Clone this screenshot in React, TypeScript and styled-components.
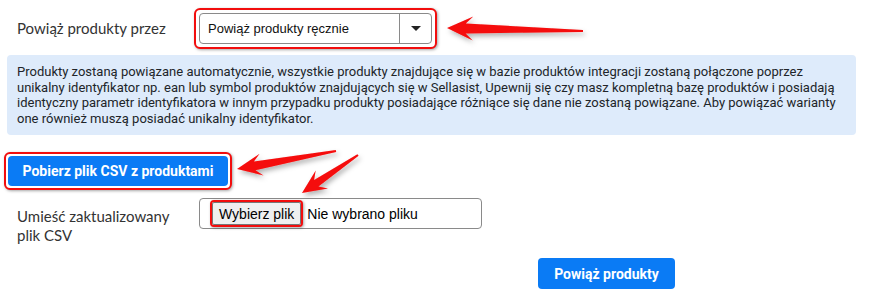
import * as React from 'react';
import styled, { createGlobalStyle } from 'styled-components';

const GlobalStyle = createGlobalStyle`
  body {
    margin: 0;
    background: #fff;
    font-family: Roboto, "Liberation Sans", sans-serif;
  }
`;

const Page = styled.div`
  position: relative;
  width: 869px;
  height: 297px;
  overflow: hidden;
  padding-top: 8px;
  box-sizing: border-box;
`;

const Row = styled.div<{ $top: number; $align?: string }>`
  display: flex;
  flex-flow: row nowrap;
  align-items: ${(p) => p.$align || 'center'};
  margin-top: ${(p) => p.$top}px;
  padding-left: 17px;
`;

const Label = styled.div<{ $w: number; $offset?: number }>`
  width: ${(p) => p.$w}px;
  margin-top: ${(p) => p.$offset || 0}px;
  flex-shrink: 0;
  font-family: Lato, "Noto Sans", sans-serif;
  font-size: 15px;
  line-height: 19px;
  color: #333;
`;

// the red marker drawn round a control in the screenshot
const Highlight = styled.div<{ $pad: number; $radius?: number }>`
  display: inline-flex;
  padding: ${(p) => p.$pad}px;
  border: 2px solid #f20d0d;
  border-radius: ${(p) => p.$radius || 6}px;
  box-shadow: 1px 1px 3px rgba(0, 0, 0, 0.35);
  background: #fff;
`;

const Select = styled.div`
  display: flex;
  align-items: stretch;
  width: 233px;
  height: 31px;
  box-sizing: border-box;
  border: 1px solid #8a8a8a;
  border-radius: 4px;
  background: #fff;

  > .value {
    flex: 1;
    display: flex;
    align-items: center;
    padding-left: 8px;
    font-family: "Liberation Sans", Arial, sans-serif;
    font-size: 13px;
    color: #111;
  }

  > .caret {
    width: 31px;
    border-left: 1px solid #8a8a8a;
    display: flex;
    align-items: center;
    justify-content: center;
  }
`;

const InfoBox = styled.div`
  margin: 6px 13px 0 7px;
  padding: 9px 10px 9px 10px;
  background: #deebfb;
  border-radius: 4px;
  font-family: Roboto, sans-serif;
  font-size: 13px;
  line-height: 15.5px;
  color: #212529;
  white-space: nowrap;
`;

const PrimaryButton = styled.button<{ $w: number; $h?: number }>`
  width: ${(p) => p.$w}px;
  height: ${(p) => p.$h || 30}px;
  border: none;
  border-radius: 4px;
  background: #0a7bf5;
  color: #fff;
  font-family: Roboto, sans-serif;
  font-weight: 700;
  font-size: 14px;
  padding: 0;
  cursor: pointer;
`;

const ButtonRow = styled.div`
  margin: 17px 0 0 4px;
`;

const FileInput = styled.div`
  display: flex;
  align-items: center;
  width: 283px;
  height: 31px;
  box-sizing: border-box;
  border: 1px solid #8a8a8a;
  border-radius: 4px;
  padding-left: 10px;
  font-family: "Liberation Sans", Arial, sans-serif;
  font-size: 14px;
  color: #000;

  > .name {
    margin-left: 4px;
  }
`;

const FileButton = styled.button`
  height: 23px;
  padding: 0 6px;
  border: 1px solid #767676;
  border-radius: 2px;
  background: #efefef;
  color: #000;
  font-family: "Liberation Sans", Arial, sans-serif;
  font-size: 14px;
`;

const Footer = styled.div`
  margin-top: 13px;
  padding-left: 538px;
`;

const Arrows = styled.svg`
  position: absolute;
  left: 0;
  top: 0;
  pointer-events: none;
`;

type Pt = [number, number];

function arrowPoints(tip: Pt, tail: Pt, hl: number, hw: number, sw: number): string {
  const dx = tail[0] - tip[0];
  const dy = tail[1] - tip[1];
  const len = Math.hypot(dx, dy);
  const ux = dx / len;
  const uy = dy / len;
  const nx = -uy;
  const ny = ux;
  const at = (d: number, o: number): Pt => [tip[0] + ux * d + nx * o, tip[1] + uy * d + ny * o];
  const pts: Pt[] = [
    tip,
    at(hl, hw),
    at(hl * 0.72, sw),
    at(len, 1),
    at(len, -1),
    at(hl * 0.72, -sw),
    at(hl, -hw),
  ];
  return pts.map((p) => p[0].toFixed(1) + ',' + p[1].toFixed(1)).join(' ');
}

const arrows = [
  { tip: [447, 28] as Pt, tail: [583, 31] as Pt, hl: 26, hw: 12, sw: 5 },
  { tip: [237, 169] as Pt, tail: [336, 151] as Pt, hl: 25, hw: 11, sw: 4.5 },
  { tip: [302, 193] as Pt, tail: [358, 155] as Pt, hl: 24, hw: 11, sw: 4 },
];

export default function App(): JSX.Element {
  return (
    <Page>
      <GlobalStyle />
      <Row $top={0}>
        <Label $w={177}>Powiąż produkty przez</Label>
        <Highlight $pad={3}>
          <Select>
            <div className="value">Powiąż produkty ręcznie</div>
            <div className="caret">
              <svg width="10" height="6" viewBox="0 0 10 6">
                <path d="M0 0 L10 0 L5 5 Z" fill="#222" />
              </svg>
            </div>
          </Select>
        </Highlight>
      </Row>

      <InfoBox>
        Produkty zostaną powiązane automatycznie, wszystkie produkty znajdujące się w bazie produktów integracji zostaną połączone poprzez
        <br />
        unikalny identyfikator np. ean lub symbol produktów znajdujących się w Sellasist, Upewnij się czy masz kompletną bazę produktów i posiadają
        <br />
        identyczny parametr identyfikatora w innym przypadku produkty posiadające różniące się dane nie zostaną powiązane. Aby powiązać warianty
        <br />
        one również muszą posiadać unikalny identyfikator.
      </InfoBox>

      <ButtonRow>
        <Highlight $pad={2}>
          <PrimaryButton $w={220}>Pobierz plik CSV z produktami</PrimaryButton>
        </Highlight>
      </ButtonRow>

      <Row $top={8} $align="flex-start">
        <Label $w={182} $offset={9}>
          Umieść zaktualizowany
          <br />
          plik CSV
        </Label>
        <FileInput>
          <Highlight $pad={0} $radius={4}>
            <FileButton>Wybierz plik</FileButton>
          </Highlight>
          <span className="name">Nie wybrano pliku</span>
        </FileInput>
      </Row>

      <Footer>
        <PrimaryButton $w={137} $h={31}>Powiąż produkty</PrimaryButton>
      </Footer>

      <Arrows width="869" height="297" viewBox="0 0 869 297">
        <defs>
          <filter id="arrowShadow" x="-20%" y="-40%" width="140%" height="180%">
            <feDropShadow dx="2" dy="3" stdDeviation="2.5" floodColor="#000" floodOpacity="0.3" />
          </filter>
        </defs>
        {arrows.map((a, i) => (
          <polygon
            key={i}
            points={arrowPoints(a.tip, a.tail, a.hl, a.hw, a.sw)}
            fill="#f50a0a"
            filter="url(#arrowShadow)"
          />
        ))}
      </Arrows>
    </Page>
  );
}
